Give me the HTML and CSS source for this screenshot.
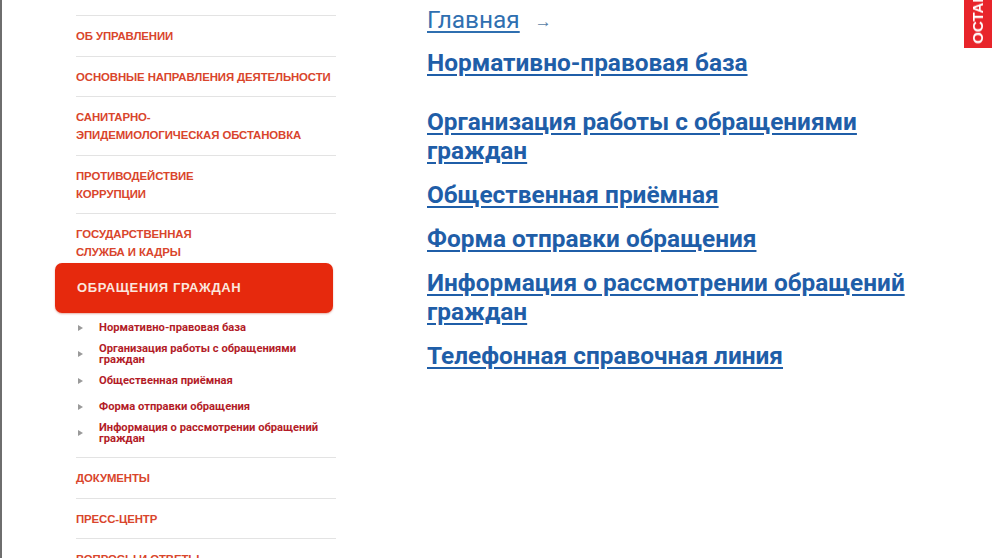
FILE: index.html
```html
<!DOCTYPE html>
<html lang="ru">
<head>
<meta charset="utf-8">
<title>Обращения граждан</title>
<link rel="stylesheet" href="styles.css">
</head>
<body>
<div class="page">
  <aside class="sidebar">
    <ul class="menu">
      <li class="menu-item"><a href="#">Об управлении</a></li>
      <li class="menu-item"><a href="#">Основные направления деятельности</a></li>
      <li class="menu-item"><a href="#">Санитарно-<br>эпидемиологическая обстановка</a></li>
      <li class="menu-item"><a href="#">Противодействие<br>коррупции</a></li>
      <li class="menu-item"><a href="#">Государственная<br>служба и кадры</a></li>
      <li class="menu-item active"><a href="#">Обращения граждан</a>
        <ul class="submenu">
          <li><a href="#">Нормативно-правовая база</a></li>
          <li><a href="#">Организация работы с обращениями граждан</a></li>
          <li><a href="#">Общественная приёмная</a></li>
          <li class="spaced"><a href="#">Форма отправки обращения</a></li>
          <li><a href="#">Информация о рассмотрении обращений граждан</a></li>
        </ul>
      </li>
      <li class="menu-item"><a href="#">Документы</a></li>
      <li class="menu-item"><a href="#">Пресс-центр</a></li>
      <li class="menu-item"><a href="#">Вопросы и ответы</a></li>
    </ul>
  </aside>
  <main class="content">
    <div class="crumbs"><a href="#" class="crumb">Главная</a><span class="arrow">→</span></div>
    <a href="#" class="link first">Нормативно-правовая база</a>
    <a href="#" class="link">Организация работы с обращениями граждан</a>
    <a href="#" class="link">Общественная приёмная</a>
    <a href="#" class="link">Форма отправки обращения</a>
    <a href="#" class="link">Информация о рассмотрении обращений граждан</a>
    <a href="#" class="link">Телефонная справочная линия</a>
  </main>
</div>
<a href="#" class="feedback-tab">ОСТАВИТЬ ОБРАЩЕНИЕ</a>
</body>
</html>
```

FILE: styles.css
```css
html, body {
  margin: 0;
  padding: 0;
  background: #fff;
  overflow: hidden;
}
body {
  font-family: "Liberation Sans", Arial, sans-serif;
  height: 558px;
}
.page {
  display: flex;
  border-left: 2px solid #6e6e6e;
  height: 558px;
  box-sizing: border-box;
}
.sidebar {
  width: 281px;
  margin-left: 53px;
  padding-top: 15px;
  flex-shrink: 0;
}
.menu, .submenu {
  list-style: none;
  margin: 0;
  padding: 0;
}
.menu-item {
  margin-left: 21px;
  border-top: 1px solid #e3e3e3;
}
.menu-item > a {
  display: block;
  padding: 11px 0 10.5px;
  font-size: 11.4px;
  line-height: 18px;
  font-weight: bold;
  text-transform: uppercase;
  color: #d9452c;
  text-decoration: none;
  letter-spacing: -0.1px;
}
.menu-item.active {
  margin-left: 0;
  margin-right: 3px;
  margin-top: -8.5px;
  border-top: none;
}
.menu-item.active > a {
  background: #e6290d;
  color: #fbe6de;
  border-radius: 7px;
  padding: 0 0 0 22px;
  height: 50px;
  line-height: 50px;
  font-size: 13px;
  letter-spacing: 0.6px;
  box-shadow: 0 1px 2px rgba(180, 30, 0, 0.35);
}
.submenu {
  padding: 9px 0 13px 21px;
}
.submenu li {
  display: flex;
  align-items: center;
  margin-bottom: 10px;
}
.submenu li:last-child {
  margin-bottom: 0;
}
.submenu li.spaced {
  margin-top: 15px;
}
.submenu li:nth-child(3) {
  margin-bottom: 0;
}
.submenu li::before {
  content: "";
  flex-shrink: 0;
  width: 0;
  height: 0;
  border-top: 3.5px solid transparent;
  border-bottom: 3.5px solid transparent;
  border-left: 5px solid #9a9a9a;
  margin: 0 16px 0 2px;
}
.submenu a {
  font-family: Roboto, "Liberation Sans", sans-serif;
  font-size: 11.2px;
  line-height: 11px;
  font-weight: bold;
  color: #b31c28;
  text-decoration: none;
  max-width: 225px;
}
.content {
  margin-left: 91px;
  padding-top: 5px;
  display: flex;
  flex-direction: column;
  align-items: flex-start;
  font-family: Roboto, "Liberation Sans", sans-serif;
  width: 520px;
}
.crumbs {
  display: flex;
  align-items: center;
  line-height: 29px;
  margin-bottom: 14px;
}
.crumb {
  font-size: 24.4px;
  color: #2f6fb0;
  text-decoration: underline;
  text-underline-offset: 3px;
}
.arrow {
  margin-left: 15px;
  font-size: 17px;
  color: #5b7fa6;
  position: relative;
  top: 2px;
}
.link {
  display: block;
  font-size: 24.4px;
  line-height: 29px;
  font-weight: bold;
  color: #1f5ea8;
  text-decoration: underline;
  text-underline-offset: 3px;
  margin-bottom: 15px;
  max-width: 490px;
}
.link.first {
  margin-bottom: 30px;
}
.feedback-tab {
  position: fixed;
  right: 0;
  bottom: calc(100% - 48px);
  width: 28px;
  padding: 4px 0;
  background: #e8242a;
  color: #fff;
  font-family: "Liberation Sans", Arial, sans-serif;
  font-weight: bold;
  font-size: 15px;
  line-height: 28px;
  text-align: left;
  text-decoration: none;
  writing-mode: vertical-rl;
  transform: rotate(180deg);
  white-space: nowrap;
}
```
